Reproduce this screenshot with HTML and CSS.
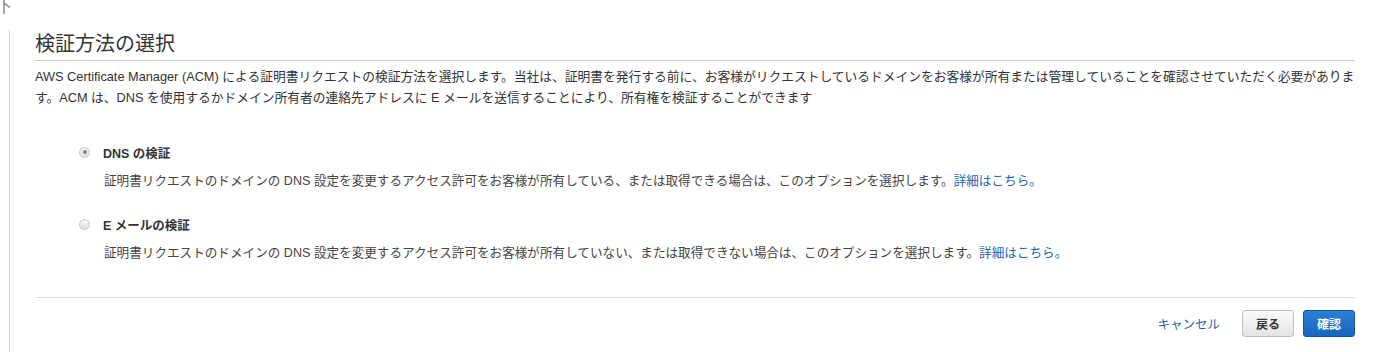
FILE: index.html
```html
<!DOCTYPE html>
<html lang="ja">
<head>
<meta charset="utf-8">
<link rel="stylesheet" href="styles.css">
</head>
<body>
<div class="corner"><svg width="14" height="16" viewBox="0 0 14 16"><path d="M4 0 V14" stroke="#9a9a9a" stroke-width="1.8" fill="none"/><path d="M4.5 3.5 L10 7.5" stroke="#9a9a9a" stroke-width="1.6" fill="none"/></svg></div>
<div class="panel">
  <h2 class="title">検証方法の選択</h2>
  <p class="intro">AWS Certificate Manager (ACM) による証明書リクエストの検証方法を選択します。当社は、証明書を発行する前に、お客様がリクエストしているドメインをお客様が所有または管理していることを確認させていただく必要があります。ACM は、DNS を使用するかドメイン所有者の連絡先アドレスに E メールを送信することにより、所有権を検証することができます</p>
  <div class="options">
    <div class="option">
      <div class="option-head"><span class="radio checked"></span><span class="label">DNS の検証</span></div>
      <p class="desc">証明書リクエストのドメインの DNS 設定を変更するアクセス許可をお客様が所有している、または取得できる場合は、このオプションを選択します。<a class="link" href="#">詳細はこちら。</a></p>
    </div>
    <div class="option">
      <div class="option-head"><span class="radio"></span><span class="label">E メールの検証</span></div>
      <p class="desc">証明書リクエストのドメインの DNS 設定を変更するアクセス許可をお客様が所有していない、または取得できない場合は、このオプションを選択します。<a class="link" href="#">詳細はこちら。</a></p>
    </div>
  </div>
  <div class="footer">
    <a class="cancel" href="#">キャンセル</a>
    <button class="btn btn-back">戻る</button>
    <button class="btn btn-primary">確認</button>
  </div>
</div>
</body>
</html>
```
FILE: styles.css
```css
html, body {
  margin: 0;
  padding: 0;
  background: #fff;
}
body {
  font-family: "Liberation Sans", "Noto Sans CJK JP", sans-serif;
  color: #333;
  font-size: 12.5px;
  height: 352px;
  overflow: hidden;
  position: relative;
}
.corner {
  position: absolute;
  left: 0;
  top: 0;
}
.panel {
  margin: 30px 0 0 9px;
  border-left: 1px solid #d4d4d4;
  padding: 0 34px 0 25px;
  height: 322px;
  box-sizing: border-box;
}
.title {
  margin: 0;
  font-size: 20px;
  font-weight: normal;
  line-height: 26px;
  padding-top: 1px;
  padding-bottom: 3px;
  border-bottom: 1px solid #cfcfcf;
  color: #333;
}
.intro {
  margin: 5px 0 0 0;
  line-height: 21px;
  font-size: 12.75px;
  color: #333;
}
.options {
  margin-top: 34px;
  padding-left: 44px;
}
.option {
  margin-bottom: 24px;
}
.option-head {
  display: flex;
  align-items: center;
  height: 20px;
  gap: 13px;
}
.radio {
  width: 11px;
  height: 11px;
  border-radius: 50%;
  border: 1px solid #c6c6c6;
  background: linear-gradient(#f7f7f7, #e0e0e0);
  box-sizing: border-box;
  position: relative;
  flex: none;
}
.radio.checked::after {
  content: "";
  position: absolute;
  left: 2.5px;
  top: 2.5px;
  width: 4px;
  height: 4px;
  border-radius: 50%;
  background: #858585;
}
.label {
  font-weight: bold;
  color: #333;
  font-size: 12.5px;
}
.desc {
  margin: 10px 0 0 25px;
  line-height: 18px;
  font-size: 12.6px;
  color: #444;
}
.link {
  color: #2363b3;
  text-decoration: none;
}
.footer {
  margin-top: 35px;
  border-top: 1px solid #dedede;
  padding-top: 12px;
  display: flex;
  justify-content: flex-end;
  align-items: center;
}
.cancel {
  color: #2363b3;
  text-decoration: none;
  margin-right: 22px;
}
.btn {
  font-family: "Liberation Sans", "Noto Sans CJK JP", sans-serif;
  font-size: 12px;
  font-weight: bold;
  height: 27px;
  width: 52px;
  border-radius: 3px;
  padding: 0;
  cursor: pointer;
}
.btn-back {
  background: linear-gradient(#fafafa, #e4e4e4);
  border: 1px solid #bdbdbd;
  color: #333;
  margin-right: 9px;
}
.btn-primary {
  background: linear-gradient(#2b7fd6, #1766c0);
  border: 1px solid #14549e;
  color: #fff;
}
```
